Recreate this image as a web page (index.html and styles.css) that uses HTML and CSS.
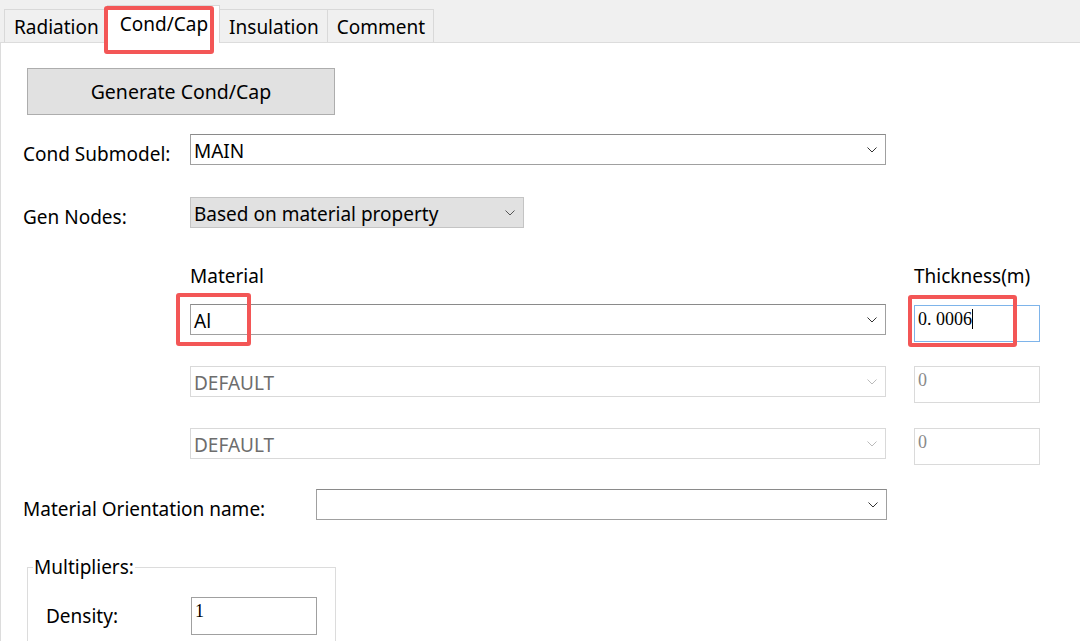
FILE: index.html
```html
<!DOCTYPE html>
<html lang="en">
<head>
    <meta charset="UTF-8">
    <title>Cond/Cap</title>
    <link rel="stylesheet" href="styles.css">
</head>
<body>
    <!--tab strip on top of the property sheet-->
    <div class="tabs">
        <div class="tab">Radiation</div>
        <div class="tab active">Cond/Cap<span class="mark mark-tab"></span></div>
        <div class="tab">Insulation</div>
        <div class="tab">Comment</div>
    </div>

    <section class="panel">
        <button type="button" class="gen-btn">Generate Cond/Cap</button>

        <div class="row row-submodel">
            <label>Cond Submodel:</label>
            <div class="combo wide">MAIN
                <svg class="chev" viewBox="0 0 10 6"><path d="M0.5 0.5 L5 5 L9.5 0.5"/></svg>
            </div>
        </div>

        <div class="row row-gen">
            <label>Gen Nodes:</label>
            <div class="combo flat">Based on material property
                <svg class="chev" viewBox="0 0 10 6"><path d="M0.5 0.5 L5 5 L9.5 0.5"/></svg>
            </div>
        </div>

        <!--material / thickness table-->
        <div class="mat-table">
            <div class="mat-head">
                <span class="col-mat">Material</span>
                <span class="col-thk">Thickness(m)</span>
            </div>
            <div class="mat-row">
                <div class="combo wide">Al
                    <svg class="chev" viewBox="0 0 10 6"><path d="M0.5 0.5 L5 5 L9.5 0.5"/></svg>
                    <span class="mark mark-al"></span>
                </div>
                <div class="num focus">0. 0006<span class="caret"></span>
                    <span class="mark mark-thk"></span>
                </div>
            </div>
            <div class="mat-row">
                <div class="combo wide off">DEFAULT
                    <svg class="chev" viewBox="0 0 10 6"><path d="M0.5 0.5 L5 5 L9.5 0.5"/></svg>
                </div>
                <div class="num off">0</div>
            </div>
            <div class="mat-row">
                <div class="combo wide off">DEFAULT
                    <svg class="chev" viewBox="0 0 10 6"><path d="M0.5 0.5 L5 5 L9.5 0.5"/></svg>
                </div>
                <div class="num off">0</div>
            </div>
        </div>

        <div class="row row-orient">
            <label>Material Orientation name:</label>
            <div class="combo orient">
                <svg class="chev" viewBox="0 0 10 6"><path d="M0.5 0.5 L5 5 L9.5 0.5"/></svg>
            </div>
        </div>

        <fieldset class="multipliers">
            <legend>Multipliers:</legend>
            <div class="row row-density">
                <label>Density:</label>
                <div class="num">1</div>
            </div>
        </fieldset>
    </section>
</body>
</html>
```

FILE: styles.css
```css
/*window look of the Cond/Cap property page*/
body {
    margin: 0;
    height: 641px;
    overflow: hidden;
    background-color: #f0f0f0;
    font-family: "Noto Sans", "Open Sans", sans-serif;
    font-size: 19px;
    color: #000;
}

/* tab strip */
.tabs {
    display: flex;
    align-items: flex-end;
    height: 42px;
    padding-left: 4px;
}
.tab {
    position: relative;
    height: 32px;
    line-height: 34px;
    padding: 0 8px 0 9px;
    border: 1px solid #d9d9d9;
    border-bottom: none;
    margin-right: -1px;
    background-color: #f0f0f0;
}
.tab.active {
    height: 37px;
    line-height: 36px;
    margin-bottom: -1px;
    padding: 0 11px 0 12px;
    background-color: #fff;
    z-index: 1;
}

/* red highlight boxes drawn over the controls */
.mark {
    position: absolute;
    border: 4px solid #f35656;
    border-radius: 3px;
    pointer-events: none;
}
.mark-tab { left: -4px; top: 0; width: 102px; height: 40px; }
.mark-al { left: -15px; top: -12px; width: 67px; height: 45px; }
.mark-thk { left: -7px; top: -11px; width: 101px; height: 44px; }

.panel {
    height: 598px;
    background-color: #fff;
    border-top: 1px solid #dcdcdc;
    border-left: 1px solid #dcdcdc;
    padding-left: 22px;
    overflow: hidden;
}

.gen-btn {
    display: block;
    width: 308px;
    height: 47px;
    margin: 25px 0 0 4px;
    background-color: #e1e1e1;
    border: 1px solid #adadad;
    font-family: inherit;
    font-size: 19.5px;
    color: #000;
    padding: 0 0 1px;
}

.row {
    display: flex;
    align-items: center;
}
.row label {
    width: 167px;
    flex: none;
    padding-top: 8px;
    line-height: 20px;
}
.row-submodel { margin-top: 19px; }
.row-gen { margin-top: 32px; }

/* combo boxes */
.combo {
    position: relative;
    box-sizing: border-box;
    height: 31px;
    line-height: 27px;
    padding: 3px 0 0 3px;
    border: 1px solid #a0a0a0;
    border-top-color: #8a8a8a;
    background-color: #fff;
}
.combo.wide { width: 696px; }
.combo.flat {
    width: 334px;
    height: 31px;
    background-color: #e1e1e1;
    border-color: #c4c4c4;
}
.combo.off {
    border-color: #d9d9d9;
    color: #6d6d6d;
}
.combo.orient { width: 571px; }
.row-orient label { width: 293px; }
.chev {
    position: absolute;
    right: 8px;
    top: 12px;
    width: 10px;
    height: 6px;
    fill: none;
    stroke: #333;
    stroke-width: 1;
}
.combo.flat .chev { stroke: #555; }
.combo.off .chev { stroke: #bbb; }

/* material table */
.mat-table {
    margin-left: 167px;
    margin-top: 35px;
}
.mat-head {
    display: flex;
    height: 26px;
    line-height: 26px;
}
.col-mat { width: 724px; }
.mat-row {
    display: flex;
    align-items: flex-start;
    gap: 28px;
    margin-top: 15px;
}
.mat-row:nth-child(3) { margin-top: -6px; padding-top: 30px; }
.mat-row:nth-child(4) { margin-top: -6px; padding-top: 31px; }

/* numeric text boxes */
.num {
    position: relative;
    box-sizing: border-box;
    width: 126px;
    height: 37px;
    padding: 3px 0 0 3px;
    line-height: 20px;
    border: 1px solid #a0a0a0;
    font-family: "Liberation Serif", serif;
    font-size: 18px;
    color: #000;
    background-color: #fff;
}
.num.focus {
    border-color: #7eb4ea;
    margin-top: 1px;
}
.num.off {
    border-color: #dadada;
    color: #8a8a8a;
}
.caret {
    display: inline-block;
    width: 1px;
    height: 20px;
    vertical-align: -4px;
    background-color: #000;
}

.row-orient { margin-top: 24px; }

/* group box */
.multipliers {
    width: 289px;
    height: 90px;
    margin: 37px 0 0 4px;
    padding: 0 0 0 18px;
    border: 1px solid #dcdcdc;
}
.multipliers legend {
    padding: 0 1px;
    margin-left: -13px;
    line-height: 20px;
}
.row-density { margin-top: 20px; }
.row-density label { width: 145px; padding-top: 0; }
.row-density .num { height: 38px; }
```
